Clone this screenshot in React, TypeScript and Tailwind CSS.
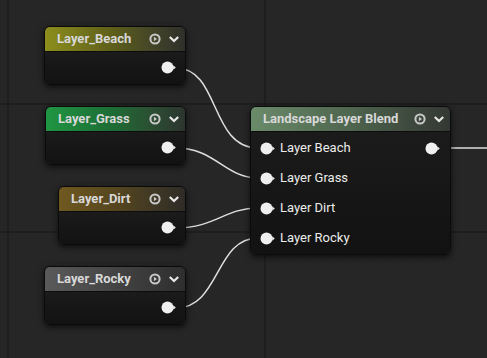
import type { ReactNode } from "react";

/*
 * Material graph canvas: four layer sample nodes wired into a
 * Landscape Layer Blend node.
 */

const FONT = { fontFamily: "Roboto, 'Open Sans', sans-serif" };

interface NodeProps {
  x: number;
  y: number;
  w: number;
  h: number;
  title: string;
  header: string;
  children?: ReactNode;
}

function PlayIcon() {
  return (
    <svg width="12" height="12" viewBox="0 0 12 12">
      <circle cx="6" cy="6" r="4.6" fill="none" stroke="#c8c8c8" strokeWidth="2" />
      <path d="M4.9 3.7 L8 6 L4.9 8.3 Z" fill="#c8c8c8" />
    </svg>
  );
}

function Chevron() {
  return (
    <svg width="12" height="12" viewBox="0 0 12 12">
      <path d="M1.8 4 L6 8 L10.2 4" fill="none" stroke="#e8e8e8" strokeWidth="2.2" />
    </svg>
  );
}

function Pin() {
  return (
    <svg width="15" height="13" viewBox="0 0 15 13" className="shrink-0">
      <circle cx="6.5" cy="6.5" r="6" fill="#f0f0f0" />
      <path d="M12.2 4.2 L14.8 6.5 L12.2 8.8 Z" fill="#f0f0f0" />
    </svg>
  );
}

function GraphNode({ x, y, w, h, title, header, children }: NodeProps) {
  return (
    <div
      className="absolute flex flex-col overflow-hidden rounded-[6px] border border-[#0b0b0b] shadow-[0_2px_6px_rgba(0,0,0,0.7)]"
      style={{ left: x, top: y, width: w, height: h }}
    >
      <div className={`flex h-[25px] shrink-0 items-center border-b border-[#0d0d0d] pl-[12px] pr-[5px] ${header}`}>
        <span className="flex-1 truncate text-[13px] font-bold text-[#d8d8d8]" style={FONT}>
          {title}
        </span>
        <div className="flex items-center gap-[7px]">
          <PlayIcon />
          <Chevron />
        </div>
      </div>
      <div className="flex-1 bg-linear-to-b from-[#1a1b1a] to-[#111211]">{children}</div>
    </div>
  );
}

function OutputBody() {
  return (
    <div className="flex justify-end pr-[9px] pt-[9px]">
      <Pin />
    </div>
  );
}

const inputs = ["Layer Beach", "Layer Grass", "Layer Dirt", "Layer Rocky"];

export default function App() {
  return (
    <div className="relative h-[358px] w-[487px] overflow-hidden bg-[#262626]">
      <svg className="absolute inset-0" width="487" height="358">
        <defs>
          <pattern id="minor" x="8" y="8" width="16" height="16" patternUnits="userSpaceOnUse">
            <path d="M0 0 H16 M0 0 V16" stroke="#282828" strokeWidth="1" fill="none" />
          </pattern>
        </defs>
        <rect width="487" height="358" fill="url(#minor)" />
        {[8, 265].map((gx) => (
          <line key={gx} x1={gx} y1="0" x2={gx} y2="358" stroke="#1c1c1c" strokeWidth="1.5" />
        ))}
        {[104, 232].map((gy) => (
          <line key={gy} x1="0" y1={gy} x2="487" y2={gy} stroke="#1c1c1c" strokeWidth="1.5" />
        ))}
        <g fill="none" stroke="#dedede" strokeWidth="1.5">
          <path d="M176 68 C 220 68, 210 148, 258 148" />
          <path d="M176 148 C 215 148, 225 178, 258 178" />
          <path d="M176 228 C 215 228, 225 208, 258 208" />
          <path d="M176 308 C 220 308, 215 238, 258 238" />
          <path d="M440 148 H 487" />
        </g>
      </svg>

      <GraphNode
        x={44}
        y={26}
        w={142}
        h={59}
        title="Layer_Beach"
        header="bg-linear-to-r from-[#8d8e1c] via-[#5c5d1a] to-[#2f302a]"
      >
        <OutputBody />
      </GraphNode>
      <GraphNode
        x={45}
        y={106}
        w={141}
        h={59}
        title="Layer_Grass"
        header="bg-linear-to-r from-[#1f9642] via-[#1d6a34] to-[#2c352f]"
      >
        <OutputBody />
      </GraphNode>
      <GraphNode
        x={58}
        y={186}
        w={128}
        h={59}
        title="Layer_Dirt"
        header="bg-linear-to-r from-[#70591f] via-[#52441f] to-[#2f2c27]"
      >
        <OutputBody />
      </GraphNode>
      <GraphNode
        x={44}
        y={266}
        w={142}
        h={59}
        title="Layer_Rocky"
        header="bg-linear-to-r from-[#5a5a5a] via-[#444444] to-[#2e2e2e]"
      >
        <OutputBody />
      </GraphNode>

      <GraphNode
        x={250}
        y={106}
        w={201}
        h={149}
        title="Landscape Layer Blend"
        header="bg-linear-to-r from-[#6a8b6a] via-[#4e654e] to-[#343834]"
      >
        <div className="flex flex-col pt-[1px]">
          {inputs.map((label, i) => (
            <div key={label} className="flex h-[30px] items-center pl-[9px] pr-[10px]">
              <Pin />
              <span className="ml-[5px] flex-1 text-[13px] text-[#ececec]" style={FONT}>
                {label}
              </span>
              {i === 0 && <Pin />}
            </div>
          ))}
        </div>
      </GraphNode>
    </div>
  );
}
